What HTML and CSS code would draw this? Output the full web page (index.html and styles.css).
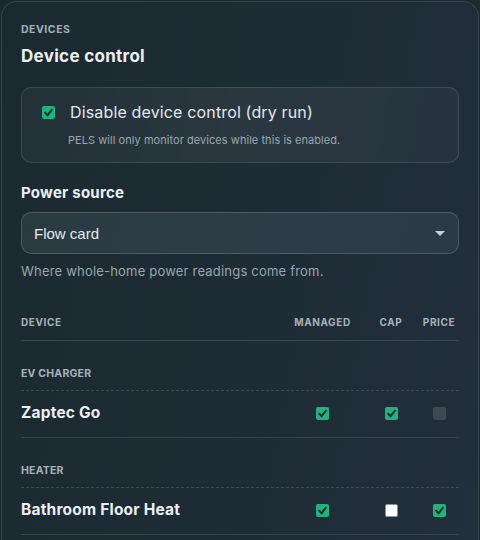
FILE: index.html
```html
<!DOCTYPE html>
<html lang="en">
<head>
<meta charset="utf-8">
<title>Devices</title>
<link rel="stylesheet" href="styles.css">
</head>
<body>
<section class="card">
  <div class="eyebrow">DEVICES</div>
  <h2 class="title">Device control</h2>

  <div class="option-box">
    <label class="check-row">
      <span class="cb cb-on"><svg viewBox="0 0 13 13"><path d="M3.2 6.8 L5.6 9.2 L9.8 3.8"/></svg></span>
      <span class="check-label">Disable device control (dry run)</span>
    </label>
    <p class="hint">PELS will only monitor devices while this is enabled.</p>
  </div>

  <h3 class="field-label">Power source</h3>
  <div class="select">
    <span class="select-value">Flow card</span>
    <svg class="caret" viewBox="0 0 10 5"><path d="M0 0 H10 L5 5 Z"/></svg>
  </div>
  <p class="help">Where whole-home power readings come from.</p>

  <div class="table">
    <div class="row head">
      <span class="c-name">DEVICE</span>
      <span class="c-col">MANAGED</span>
      <span class="c-col">CAP</span>
      <span class="c-col">PRICE</span>
    </div>

    <div class="group">EV CHARGER</div>
    <div class="row device">
      <span class="c-name">Zaptec Go</span>
      <span class="c-col"><span class="cb cb-on"><svg viewBox="0 0 13 13"><path d="M3.2 6.8 L5.6 9.2 L9.8 3.8"/></svg></span></span>
      <span class="c-col"><span class="cb cb-on"><svg viewBox="0 0 13 13"><path d="M3.2 6.8 L5.6 9.2 L9.8 3.8"/></svg></span></span>
      <span class="c-col"><span class="cb cb-disabled"></span></span>
    </div>

    <div class="group">HEATER</div>
    <div class="row device">
      <span class="c-name">Bathroom Floor Heat</span>
      <span class="c-col"><span class="cb cb-on"><svg viewBox="0 0 13 13"><path d="M3.2 6.8 L5.6 9.2 L9.8 3.8"/></svg></span></span>
      <span class="c-col"><span class="cb cb-off"></span></span>
      <span class="c-col"><span class="cb cb-on"><svg viewBox="0 0 13 13"><path d="M3.2 6.8 L5.6 9.2 L9.8 3.8"/></svg></span></span>
    </div>
  </div>
</section>
</body>
</html>
```

FILE: styles.css
```css
* { box-sizing: border-box; }

html, body {
  margin: 0;
  padding: 0;
  background: #1c2931;
  height: 540px;
  overflow: hidden;
}

body {
  padding: 1px 1px 0 1px;
  font-family: Inter, "DejaVu Sans", sans-serif;
  color: #e8ecef;
}

.card {
  border: 1px solid #36434c;
  border-bottom: none;
  border-radius: 16px 16px 0 0;
  background: linear-gradient(100deg, #1b2a30 0%, #1e2c35 55%, #222f3c 100%);
  padding: 21px 19px 0 19px;
  min-height: 560px;
}

.eyebrow {
  font-size: 10.5px;
  line-height: 14px;
  font-weight: 700;
  letter-spacing: 0.05em;
  color: #a3afba;
}

.title {
  margin: 8px 0 0 0;
  font-size: 17px;
  line-height: 22px;
  font-weight: 700;
  letter-spacing: 0.3px;
  color: #eceff2;
}

.option-box {
  margin-top: 20px;
  border: 1px solid rgba(255, 255, 255, 0.11);
  border-radius: 10px;
  background: linear-gradient(100deg, rgba(255,255,255,0.035), rgba(255,255,255,0.06) 50%, rgba(255,255,255,0.03));
  padding: 14px 20px 14px 20px;
}

.check-row {
  display: flex;
  align-items: center;
  gap: 15px;
  line-height: 20px;
}

.check-label {
  font-size: 16px;
  letter-spacing: 0.15px;
  color: #e3e8ec;
}

.hint {
  margin: 10px 0 0 26px;
  font-size: 11px;
  line-height: 16px;
  letter-spacing: 0.05px;
  color: #9aa6b0;
}

.field-label {
  margin: 20px 0 0 0;
  font-size: 15px;
  line-height: 20px;
  font-weight: 700;
  letter-spacing: 0.25px;
  color: #eceff2;
}

.select {
  margin-top: 9px;
  height: 42px;
  border: 1px solid rgba(255, 255, 255, 0.16);
  border-radius: 10px;
  background: linear-gradient(100deg, #2a3a41 0%, #2d3d46 40%, #2c3a45 100%);
  display: flex;
  align-items: center;
  justify-content: space-between;
  padding: 0 13px 0 12px;
}

.select-value {
  font-family: "Liberation Sans", Arial, sans-serif;
  font-size: 15px;
  color: #e6e9ec;
}

.caret {
  width: 10px;
  height: 5px;
  fill: #c9d1d8;
}

.help {
  margin: 8px 0 0 0;
  font-size: 13px;
  line-height: 18px;
  letter-spacing: 0.2px;
  color: #9aa6b0;
}

.table {
  margin-top: 35px;
}

.row {
  display: grid;
  grid-template-columns: 1fr 81px 56px 40px;
  align-items: center;
}

.c-col {
  display: flex;
  justify-content: center;
}

.head {
  font-size: 10px;
  line-height: 14px;
  font-weight: 700;
  letter-spacing: 0.06em;
  color: #a7b2bc;
  padding-bottom: 11px;
  border-bottom: 1px solid #3a4851;
}

.group {
  padding: 25px 0 8px 0;
  font-size: 10.5px;
  line-height: 16px;
  font-weight: 700;
  letter-spacing: 0.02em;
  color: #a7b2bc;
  border-bottom: 1px dashed #3b4952;
}

.device {
  padding: 11px 0 13px 0;
  line-height: 22px;
  border-bottom: 1px solid #35434c;
}

.device .c-name {
  font-size: 15.5px;
  font-weight: 700;
  letter-spacing: 0.2px;
  color: #eceff2;
}

.cb {
  width: 13px;
  height: 13px;
  border-radius: 2px;
  display: inline-flex;
  flex: none;
}

.cb svg {
  width: 13px;
  height: 13px;
  fill: none;
  stroke: #1e2b30;
  stroke-width: 2;
  stroke-linecap: square;
}

.cb-on { background: #1eb47c; }
.cb-disabled { background: #3d4851; }
.cb-off { background: #ffffff; border: 1px solid #8a949c; }
```
